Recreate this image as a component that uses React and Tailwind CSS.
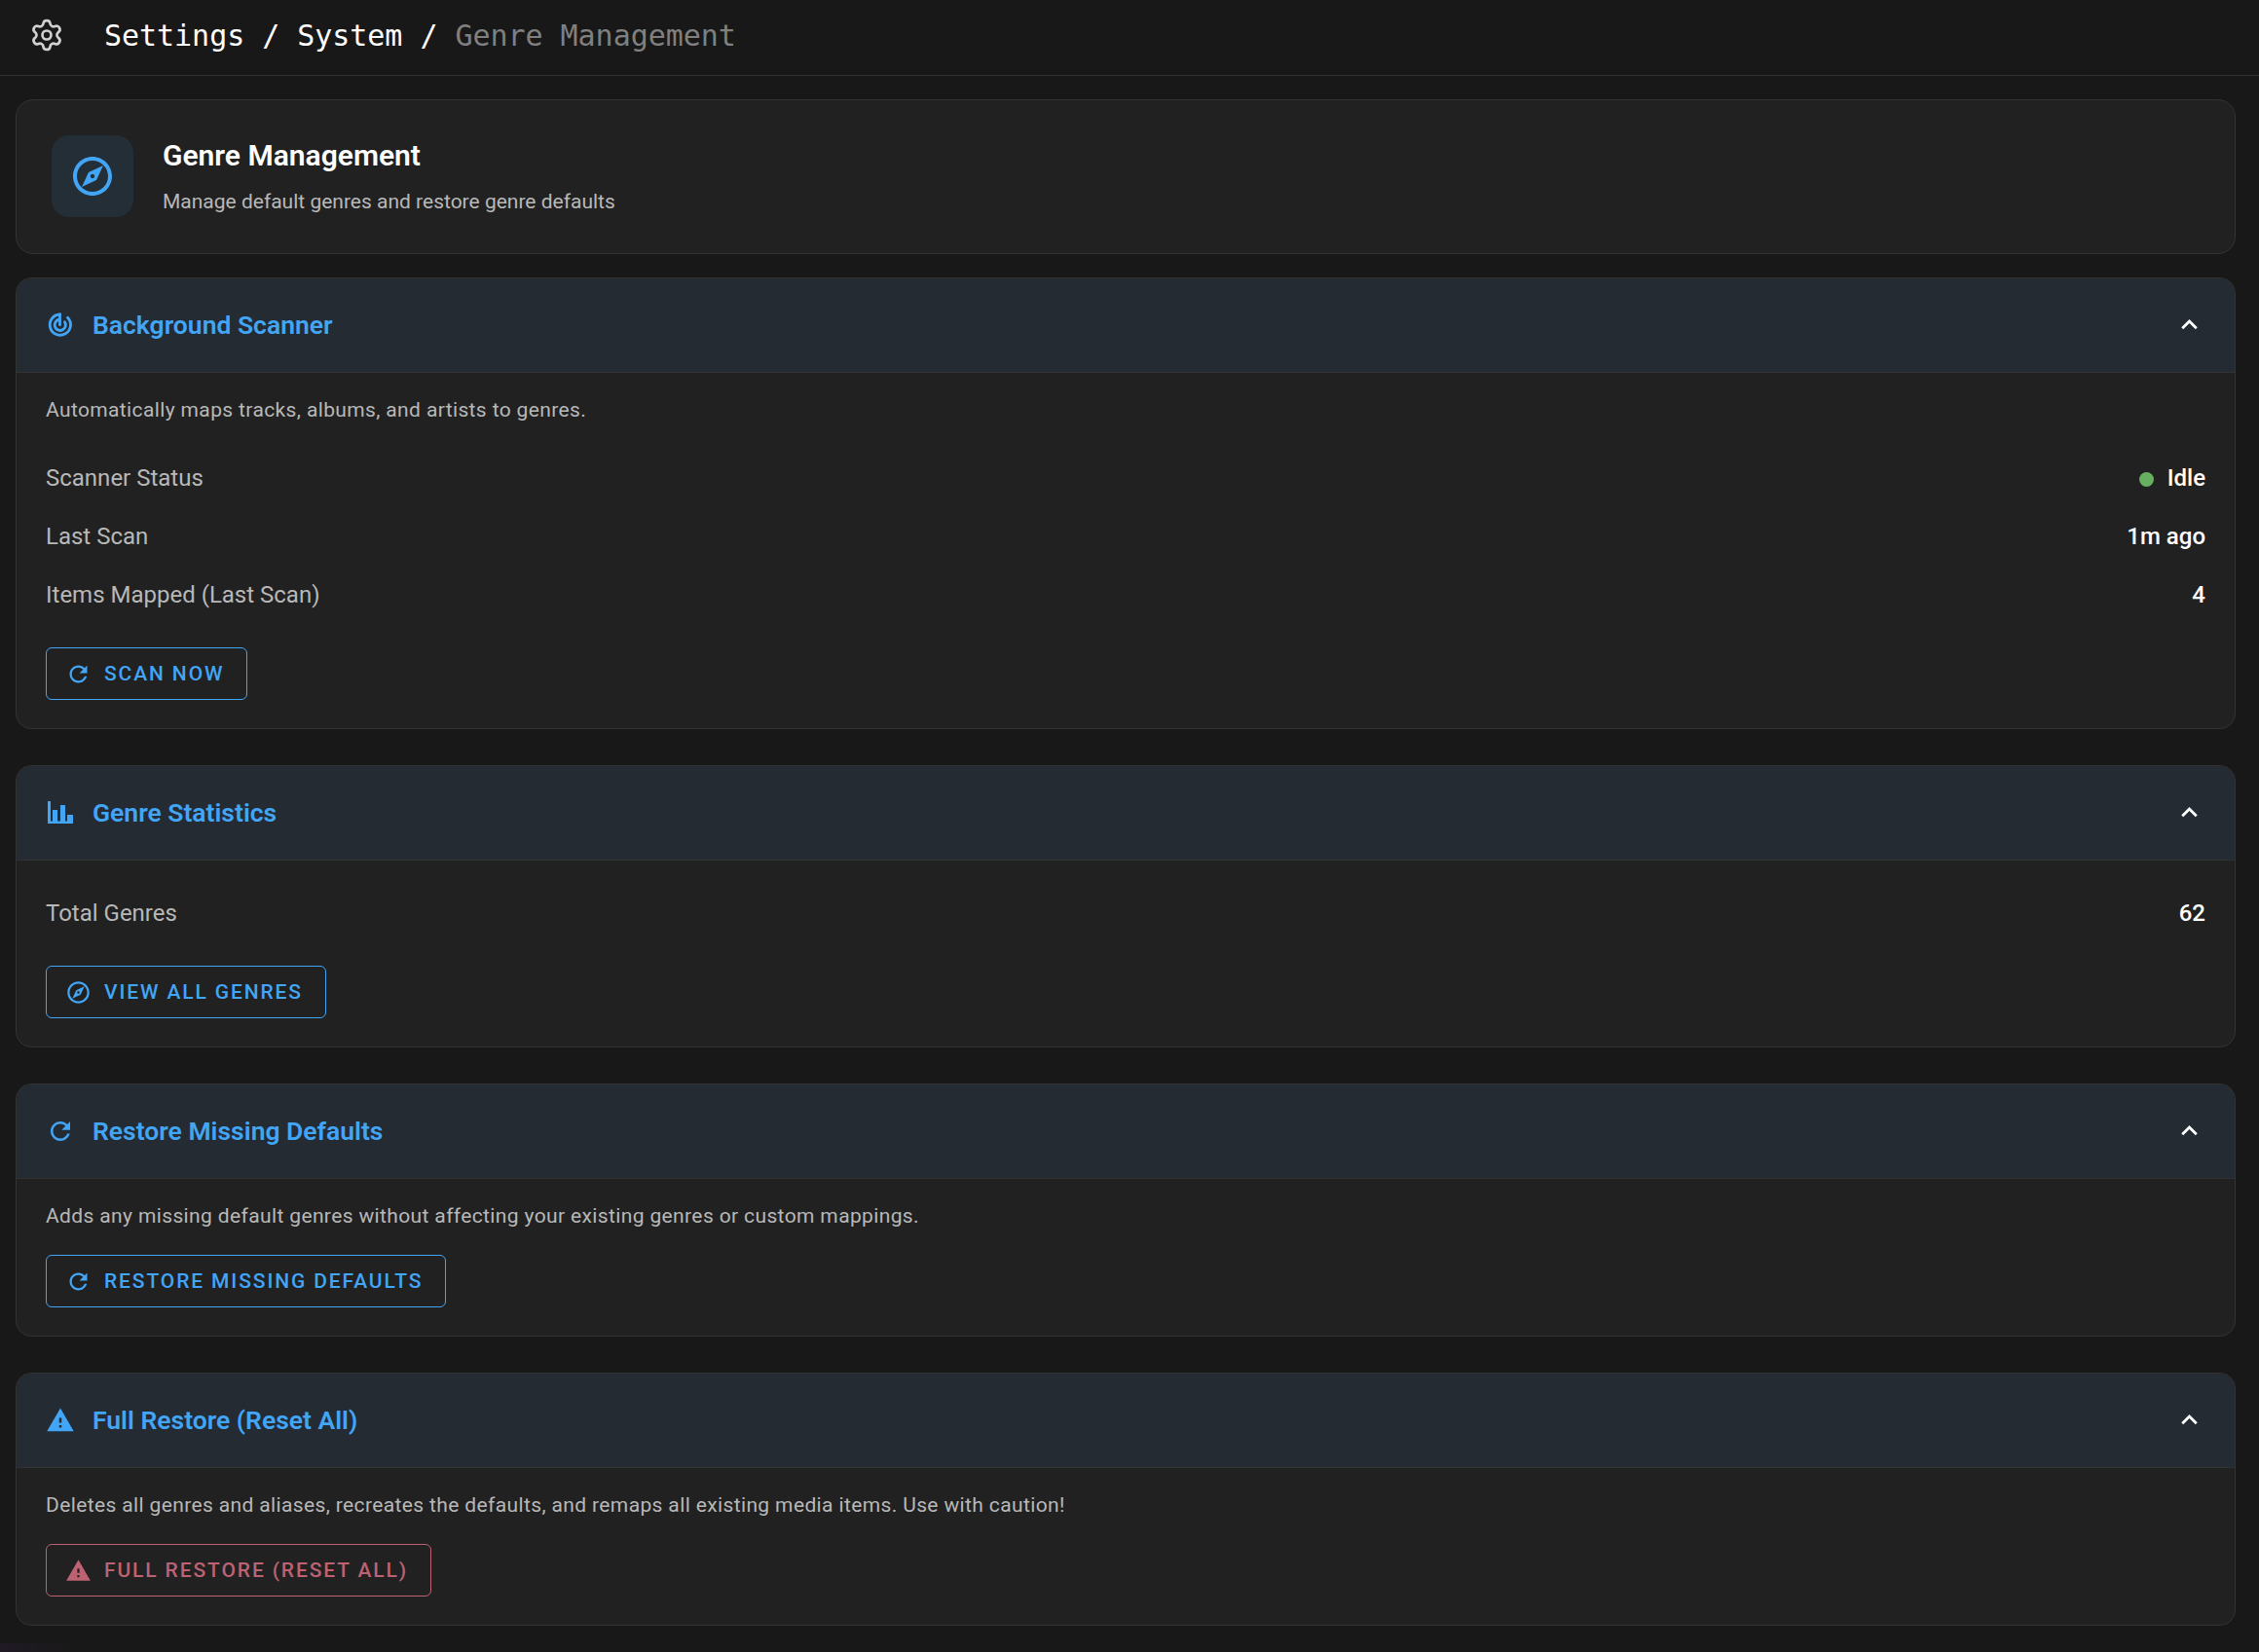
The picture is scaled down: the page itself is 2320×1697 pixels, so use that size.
import React from 'react';
import { Settings } from 'lucide-react';

const REFRESH = 'M17.65 6.35C16.2 4.9 14.21 4 12 4c-4.42 0-7.99 3.58-7.99 8s3.57 8 7.99 8c3.73 0 6.84-2.55 7.73-6h-2.08c-.82 2.33-3.04 4-5.65 4-3.31 0-6-2.69-6-6s2.69-6 6-6c1.66 0 3.14.69 4.22 1.78L13 11h7V4l-2.35 2.35z';
const WARNING = 'M1 21h22L12 2 1 21zm12-3h-2v-2h2v2zm0-4h-2v-4h2v4z';
const EXPLORE = 'M12 2C6.48 2 2 6.48 2 12s4.48 10 10 10 10-4.48 10-10S17.52 2 12 2zm0 18c-4.41 0-8-3.59-8-8s3.59-8 8-8 8 3.59 8 8-3.59 8-8 8zm-5.5-2.5l7.51-3.49L17.5 6.5 9.99 9.99 6.5 17.5zm5.5-6.6c.61 0 1.1.49 1.1 1.1s-.49 1.1-1.1 1.1-1.1-.49-1.1-1.1.49-1.1 1.1-1.1z';
const CHEVRON = 'M12 8l-6 6 1.41 1.41L12 10.83l4.59 4.58L18 14z';
const BARS = 'M1.6 2.4H4V18.8H5.6V9.6H9.6V18.8H12V5.6H16V18.8H17.6V13.6H22.4V20.8H1.6Z';

const Icon = ({ d, className }) => (
  <svg viewBox="0 0 24 24" fill="currentColor" className={className}>
    <path d={d} />
  </svg>
);

const Radar = ({ className }) => (
  <svg viewBox="0 0 24 24" fill="none" stroke="currentColor" strokeWidth="2.3" strokeLinecap="round" className={className}>
    <path d="M11.6 3.2A8.5 8.5 0 1 0 18 5.8" />
    <path d="M11 7.4A4.5 4.5 0 1 0 15.6 9.4" />
    <path d="M11.6 3.2V11.8" />
  </svg>
);

const Row = ({ label, children }) => (
  <div className="flex items-center justify-between h-[60px] pt-[2px] text-[24px] text-[#b8b8b8]">
    <span>{label}</span>
    <span className="flex items-center gap-[14px] text-white font-medium">{children}</span>
  </div>
);

const ActionButton = ({ icon, children, danger }) => (
  <button
    className={`flex items-center h-[54px] pl-[19px] pr-[23px] gap-[13px] border rounded-[6px] text-[21px] font-medium tracking-[1.88px] uppercase ${
      danger ? 'border-[#bd6272] text-[#bd6272]' : 'border-[#42a5f5] text-[#42a5f5]'
    }`}
  >
    {icon}
    <span className="pt-[1px]">{children}</span>
  </button>
);

const Section = ({ icon, title, className, bodyClass, children }) => (
  <section className={`bg-[#212121] border border-[#333333] rounded-[16px] overflow-hidden ${className}`}>
    <div className="flex items-center justify-between h-[97px] pl-[30px] pr-[30px] bg-[#242b33] border-b border-[#333333]">
      <div className="flex items-center gap-[18px] text-[#42a5f5]">
        {icon}
        <h2 className="text-[26.5px] font-semibold">{title}</h2>
      </div>
      <Icon d={CHEVRON} className="w-[33px] h-[33px] -mt-[2px] text-white" />
    </div>
    <div className={`px-[30px] pb-[29px] ${bodyClass}`}>{children}</div>
  </section>
);

const Desc = ({ children }) => <p className="h-[32px] pt-[1px] text-[21px] leading-[32px] text-[#b8b8b8] tracking-[0.37px]">{children}</p>;

export default function App() {
  return (
    <div className="relative min-h-[1697px] bg-[#181818] font-['Roboto',sans-serif]">
      <header className="flex items-center h-[78px] pl-[30px] border-b border-[#333333] bg-[#181818]">
        <Settings className="w-[36px] h-[36px] text-[#d0d0d0] -mt-[6px]" strokeWidth={1.8} />
        <div className="ml-[41px] font-['DejaVu_Sans_Mono',monospace] text-[30px] tracking-[-0.04px] -mt-[5px] text-white">
          Settings / System / <span className="text-[#808080]">Genre Management</span>
        </div>
      </header>

      <main className="pl-[16px] pr-[24px] pt-[24px]">
        <div className="flex items-center h-[159px] pl-[36px] gap-[30px] bg-[#212121] border border-[#333333] rounded-[18px]">
          <div className="flex items-center justify-center w-[84px] h-[84px] -mt-[1px] rounded-[18px] bg-[#242e36]">
            <Icon d={EXPLORE} className="w-[48px] h-[48px] text-[#42a5f5]" />
          </div>
          <div>
            <h1 className="text-[30px] leading-[40px] font-semibold text-white">Genre Management</h1>
            <p className="mt-[11px] text-[21px] leading-[32px] text-[#b8b8b8]">Manage default genres and restore genre defaults</p>
          </div>
        </div>

        <Section className="mt-[24px]" bodyClass="pt-[21px]" title="Background Scanner" icon={<Radar className="w-[30px] h-[30px]" />}>
          <Desc>Automatically maps tracks, albums, and artists to genres.</Desc>
          <div className="mt-[24px]">
            <Row label="Scanner Status">
              <span className="w-[15px] h-[15px] mt-[2px] rounded-full bg-[#66b060]" />
              Idle
            </Row>
            <Row label="Last Scan">1m ago</Row>
            <Row label="Items Mapped (Last Scan)">4</Row>
          </div>
          <div className="mt-[25px] flex">
            <ActionButton icon={<Icon d={REFRESH} className="w-[27px] h-[27px]" />}>Scan Now</ActionButton>
          </div>
        </Section>

        <Section className="mt-[37px]" bodyClass="pt-[23px]" title="Genre Statistics" icon={<Icon d={BARS} className="w-[30px] h-[30px]" />}>
          <Row label="Total Genres">62</Row>
          <div className="mt-[25px] flex">
            <ActionButton icon={<Icon d={EXPLORE} className="w-[27px] h-[27px]" />}>View All Genres</ActionButton>
          </div>
        </Section>

        <Section className="mt-[37px]" bodyClass="pt-[21px]" title="Restore Missing Defaults" icon={<Icon d={REFRESH} className="w-[30px] h-[30px]" />}>
          <Desc>Adds any missing default genres without affecting your existing genres or custom mappings.</Desc>
          <div className="mt-[25px] flex">
            <ActionButton icon={<Icon d={REFRESH} className="w-[27px] h-[27px]" />}>Restore Missing Defaults</ActionButton>
          </div>
        </Section>

        <Section className="mt-[37px]" bodyClass="pt-[21px]" title="Full Restore (Reset All)" icon={<Icon d={WARNING} className="w-[30px] h-[30px]" />}>
          <Desc>Deletes all genres and aliases, recreates the defaults, and remaps all existing media items. Use with caution!</Desc>
          <div className="mt-[25px] flex">
            <ActionButton danger icon={<Icon d={WARNING} className="w-[27px] h-[27px]" />}>Full Restore (Reset All)</ActionButton>
          </div>
        </Section>
      </main>

      {/* faint glow peeking in at the bottom left corner */}
      <div className="absolute left-0 bottom-0 w-[80px] h-[9px] bg-gradient-to-r from-[#201a24] to-[#181818]" />
    </div>
  );
}
